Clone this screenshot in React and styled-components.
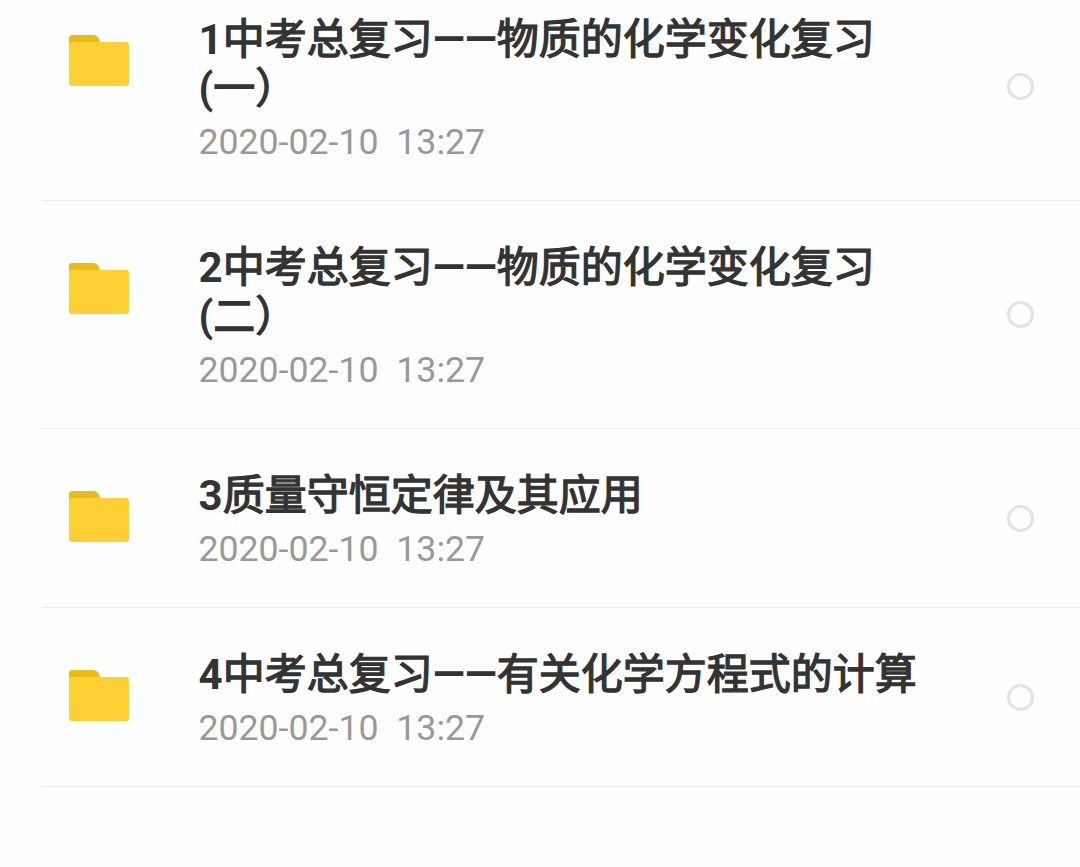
import styled, { createGlobalStyle } from "styled-components";

const GlobalStyle = createGlobalStyle`
    body {
        margin: 0;
        background: #fefefe;
        overflow: hidden;
    }
`;

const SList = styled.main`
    width: 1080px;
    height: 867px;
    overflow: hidden;
    font-family: Roboto, "Noto Sans CJK SC", sans-serif;
`;

const SRow = styled.article`
    display: flex;
    box-sizing: border-box;
    height: ${p => p.$height}px;
    margin-left: 41px;
    padding-left: 27px;
    border-bottom: 1px solid #ededed;

    & .folder {
        flex: none;
        width: 61px;
        height: 52px;
        margin-top: ${p => p.$top + 20}px;
    }
`;

const SInfo = styled.div`
    flex: none;
    width: 740px;
    margin-left: 69px;
    padding-top: ${p => p.$top}px;
`;

const STitle = styled.h2`
    margin: 0;
    padding-left: .6px;
    font-size: 42px;
    font-weight: 700;
    line-height: 49px;
    color: #333;
    white-space: pre-line;
`;

// regular hanzi thickened by a stroke, lighter than the real bold
const SHanzi = styled.span`
    font-weight: 400;
    -webkit-text-stroke: 1.3px #333;
`;

const SDate = styled.time`
    display: block;
    padding-left: .4px;
    font-size: 35.7px;
    line-height: 42px;
    margin-top: 8px;
    color: #999;
    white-space: pre;
`;

const SRadio = styled.span`
    flex: none;
    align-self: flex-start;
    box-sizing: border-box;
    width: 27px;
    height: 27px;
    margin: ${p => p.$top}px 0 0 69px;
    border: 3px solid #e3e3e3;
    border-radius: 50%;
`;

const folders = [
    { title: "1中考总复习——物质的化学变化复习\n(一）", height: 201, top: 15, radio: 73 },
    { title: "2中考总复习——物质的化学变化复习\n(二）", height: 228, top: 42, radio: 100 },
    { title: "3质量守恒定律及其应用", height: 179, top: 42, radio: 76 },
    { title: "4中考总复习——有关化学方程式的计算", height: 179, top: 42, radio: 76 }
];

function Folder() {
    return (
        <svg className="folder" viewBox="0 0 61 52">
            <path d="M1 10V3Q1 0 4 0H25Q29 0 31 4L33 10Z" fill="#e9bb15" />
            <path d="M1 7H58Q61 7 61 10V48Q61 51 58 51H4Q1 51 1 48Z" fill="#ffd033" />
        </svg>
    )
}

function Title({ text }) {
    return (
        <STitle>
            {text.split(/([\u4e00-\u9fff\uff09]+)/).map((part, i) => (
                i % 2 ? <SHanzi key={i}>{part}</SHanzi> : part
            ))}
        </STitle>
    )
}

export default function App() {
    return (
        <SList>
            <GlobalStyle />
            {folders.map(f => (
                <SRow key={f.title} $height={f.height} $top={f.top}>
                    <Folder />
                    <SInfo $top={f.top}>
                        <Title text={f.title} />
                        <SDate>{"2020-02-10  13:27"}</SDate>
                    </SInfo>
                    <SRadio $top={f.radio} />
                </SRow>
            ))}
        </SList>
    )
}
